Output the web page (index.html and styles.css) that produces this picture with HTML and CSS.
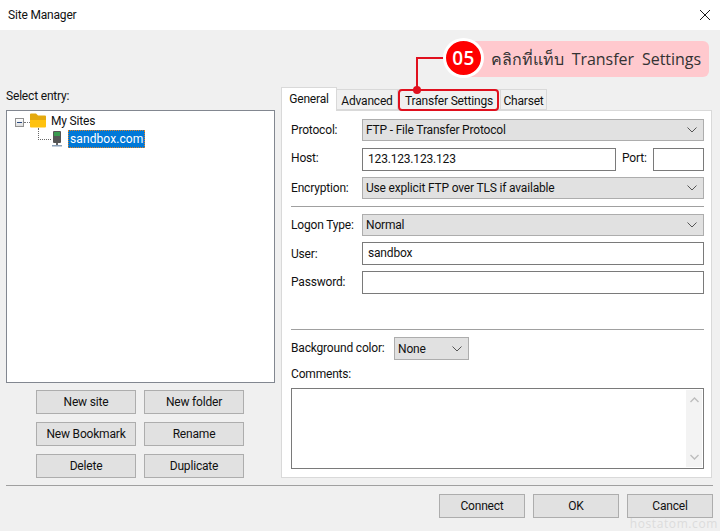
FILE: index.html
```html
<!DOCTYPE html>
<html lang="en">
<head>
<meta charset="utf-8">
<title>Site Manager</title>
<link rel="stylesheet" href="styles.css">
</head>
<body>
<div class="dialog">
  <header class="titlebar">
    <span>Site Manager</span>
    <svg class="close" width="12" height="12" viewBox="0 0 12 12"><path d="M1 1L11 11M11 1L1 11" stroke="#1a1a1a" stroke-width="1" fill="none"/></svg>
  </header>
  <div class="main">
    <section class="left">
      <div class="select-label">Select entry:</div>
      <div class="tree">
        <div class="tree-row root">
          <span class="expander"></span>
          <span class="dots-h"></span>
          <svg class="folder" width="16" height="15" viewBox="0 0 16 15"><path d="M0 1.5Q0 0.5 1 0.5H6L8 2.5H15Q16 2.5 16 3.5V7H0Z" fill="#e4a90e"/><path d="M0 7H16V13.5Q16 14.5 15 14.5H1Q0 14.5 0 13.5Z" fill="#ffc20f"/></svg>
          <span class="tree-text">My Sites</span>
        </div>
        <div class="tree-row child">
          <span class="elbow"></span>
          <svg class="server" width="12" height="16" viewBox="0 0 12 16"><rect x="2" y="0" width="8" height="12" rx="1" fill="#555"/><rect x="3" y="1" width="6" height="4" fill="#3a9a50"/><rect x="5" y="12" width="2" height="2" fill="#666"/><rect x="1" y="14" width="10" height="1.5" fill="#8aa0b8"/></svg>
          <span class="selected">sandbox.com</span>
        </div>
      </div>
      <div class="site-buttons">
        <button class="btn">New site</button>
        <button class="btn">New folder</button>
        <button class="btn">New Bookmark</button>
        <button class="btn">Rename</button>
        <button class="btn">Delete</button>
        <button class="btn">Duplicate</button>
      </div>
    </section>
    <section class="right">
      <nav class="tabs">
        <span class="tab active">General</span>
        <span class="tab t-adv">Advanced</span>
        <span class="tab t-trans">Transfer Settings</span>
        <span class="tab t-char">Charset</span>
      </nav>
      <div class="panel">
        <div class="row r-proto"><label>Protocol:</label><div class="select grow"><span>FTP - File Transfer Protocol</span><svg class="chev" width="10" height="6" viewBox="0 0 10 6"><path d="M0.5 0.5L5 5L9.5 0.5" stroke="#555" fill="none"/></svg></div></div>
        <div class="row r-host"><label>Host:</label><div class="input host">123.123.123.123</div><label class="port-label">Port:</label><div class="input port"></div></div>
        <div class="row r-enc"><label>Encryption:</label><div class="select grow"><span>Use explicit FTP over TLS if available</span><svg class="chev" width="10" height="6" viewBox="0 0 10 6"><path d="M0.5 0.5L5 5L9.5 0.5" stroke="#555" fill="none"/></svg></div></div>
        <hr class="sep sep-1">
        <div class="row r-logon"><label>Logon Type:</label><div class="select grow"><span>Normal</span><svg class="chev" width="10" height="6" viewBox="0 0 10 6"><path d="M0.5 0.5L5 5L9.5 0.5" stroke="#555" fill="none"/></svg></div></div>
        <div class="row r-user"><label>User:</label><div class="input grow">sandbox</div></div>
        <div class="row r-pass"><label>Password:</label><div class="input grow"></div></div>
        <hr class="sep sep-2">
        <div class="row r-bg"><label class="bg-label">Background color:</label><div class="select bg"><span>None</span><svg class="chev" width="10" height="6" viewBox="0 0 10 6"><path d="M0.5 0.5L5 5L9.5 0.5" stroke="#555" fill="none"/></svg></div></div>
        <div class="comments-label">Comments:</div>
        <div class="comments">
          <div class="scrollbar">
            <svg width="9" height="6" viewBox="0 0 9 6"><path d="M0.5 5L4.5 1L8.5 5" stroke="#bdbdbd" stroke-width="1.4" fill="none"/></svg>
            <svg width="9" height="6" viewBox="0 0 9 6"><path d="M0.5 1L4.5 5L8.5 1" stroke="#bdbdbd" stroke-width="1.4" fill="none"/></svg>
          </div>
        </div>
      </div>
    </section>
  </div>
  <hr class="footer-sep">
  <footer class="footer">
    <button class="btn wide">Connect</button>
    <button class="btn wide">OK</button>
    <button class="btn wide">Cancel</button>
  </footer>
</div>

<div class="note">
  <span class="note-text">คลิกที่แท็บ Transfer Settings</span>
</div>
<div class="note-line-h"></div>
<div class="note-line-v"></div>
<div class="note-dot"></div>
<div class="note-badge">05</div>
<div class="note-frame"></div>
<div class="watermark">hostatom.com</div>
</body>
</html>
```
FILE: styles.css
```css
* { box-sizing: border-box; }
html, body { margin: 0; padding: 0; }
body {
  width: 720px; height: 531px; overflow: hidden; position: relative;
  background: #f0f0f0; color: #111;
  font: 12px/16px Roboto, "Open Sans", sans-serif;
  letter-spacing: -0.18px;
}
.titlebar {
  height: 30px; background: #fff; display: flex; align-items: center; justify-content: space-between;
  padding: 0 9px 0 8px;
}
.main { display: flex; padding: 0 8px 0 6px; height: 448px; }
.left { width: 269px; flex: none; margin-right: 6px; padding-top: 58px; }
.select-label { height: 22px; }
.tree { height: 273px; background: #fff; border: 1px solid #828790; padding-top: 1px; }
.tree-row { display: flex; align-items: center; height: 18px; position: relative; }
.root { padding-left: 8px; }
.expander { width: 9px; height: 9px; border: 1px solid #919191; background: linear-gradient(#fff,#ddd); position: relative; margin-top: 2px; }
.expander::after { content: ""; position: absolute; left: 1px; top: 3px; width: 5px; height: 1px; background: #2a4a80; }
.dots-h { width: 6px; border-top: 1px dotted #777; margin-top: 2px; }
.folder { margin-right: 5px; margin-top: -1px; }
.child { padding-left: 30px; }
.elbow { position: absolute; left: 31px; top: -2px; width: 13px; height: 12px; border-left: 1px dotted #666; border-bottom: 1px dotted #666; }
.server { margin-left: 14px; margin-right: 5px; }
.selected { background: #0078d7; color: #fff; height: 18px; padding: 0 1px; line-height: 16px; border: 1px dotted #e08020; font-size: 12px; letter-spacing: 0.1px; }
.site-buttons { display: grid; grid-template-columns: 100px 100px; column-gap: 8px; row-gap: 8px; padding: 7px 0 0 30px; }
.btn {
  height: 24px; background: #e1e1e1; border: 1px solid #adadad; font: inherit; letter-spacing: inherit; color: #111; padding: 0;
}
.right { width: 431px; flex: none; padding-top: 58px; }
.tabs { display: flex; height: 22px; align-items: flex-end; }
.tab { height: 21px; background: #f0f0f0; border: 1px solid #d9d9d9; border-left: 0; padding: 3px 0 0; text-align: center; display: block; }
.tab.active { height: 24px; width: 56px; background: #fff; border-left: 1px solid #d9d9d9; border-bottom: 0; margin-bottom: -1px; padding-top: 3px; position: relative; z-index: 1; }
.t-adv { width: 61px; }
.t-trans { width: 103px; }
.t-char { width: 46px; }
.panel { height: 368px; background: #fff; border: 1px solid #d9d9d9; padding: 8px 7px 0 9px; }
.row { display: flex; align-items: center; }
.row label { width: 71px; flex: none; }
.r-proto, .r-enc, .r-logon { height: 22px; }
.r-host { height: 23px; margin: 7px 0 6px; }
.r-host label { margin-top: -3px; }
.r-pass label, .r-bg label { margin-top: -1px; }
.r-user { height: 23px; margin: 6px 0; }
.r-pass { height: 23px; }
.r-logon { margin-top: 7px; }
.grow { flex: 1; }
.select { height: 100%; background: #e1e1e1; border: 1px solid #adadad; display: flex; align-items: center; justify-content: space-between; padding: 0 3px 0 3px; }
.input { height: 100%; background: #fff; border: 1px solid #7a7a7a; padding: 2px 5px; }
.host { width: 254px; flex: none; }
.row .port-label { width: auto; margin-left: 6px; margin-right: 0; }
.port { width: 51px; flex: none; margin-left: auto; }
.chev { margin-right: 3px; }
.sep { border: 0; border-top: 1px solid #a0a0a0; height: 0; margin: 0; }
.sep-1 { margin-top: 7px; }
.sep-2 { margin-top: 35px; }
.r-bg { height: 23px; margin-top: 7px; }
.row .bg-label { width: 103px; }
.bg { width: 75px; }
.comments-label { margin-top: 6px; height: 22px; }
.comments { height: 81px; background: #fff; border: 1px solid #7a7a7a; display: flex; justify-content: flex-end; margin-top: 0; padding: 1px; }
.scrollbar { width: 16px; background: #f3f3f3; display: flex; flex-direction: column; justify-content: space-between; align-items: center; padding: 7px 0; }
.footer-sep { border: 0; border-top: 1px solid #a0a0a0; margin: 7px 7px 0 0; height: 0; margin-left: 6px; }
.footer { display: flex; justify-content: flex-end; gap: 8px; padding: 8px 7px 0 0; }
.wide { width: 86px; }

.note { position: absolute; left: 470px; top: 41px; width: 239px; height: 36px; background: #ffc9ce; border-radius: 0 6px 6px 0; display: flex; align-items: center; padding-left: 21px; font: 400 16px/20px "Open Sans", sans-serif; word-spacing: 4px; letter-spacing: -0.05px; color: #333; white-space: nowrap; }
.note-badge { position: absolute; left: 443px; top: 38px; width: 41px; height: 40px; border-radius: 50%; background: #f00; border: 3px solid #fff; color: #fff; font: 600 19px/34px "Open Sans", sans-serif; letter-spacing: 0.5px; text-align: center; }
.note-line-h { position: absolute; left: 416px; top: 57px; width: 30px; height: 2px; background: #e0101e; }
.note-line-v { position: absolute; left: 416px; top: 57px; width: 2px; height: 33px; background: #e0101e; }
.note-dot { position: absolute; left: 413px; top: 86px; width: 8px; height: 8px; border-radius: 50%; background: #e0101e; }
.note-frame { position: absolute; left: 398px; top: 89px; width: 101px; height: 22px; border: 2px solid #e0101e; border-radius: 4px; }
.watermark { position: absolute; right: 2px; bottom: 0; color: #dcdcdc; font: 12px/15px "Open Sans", sans-serif; letter-spacing: 0.6px; }
```
